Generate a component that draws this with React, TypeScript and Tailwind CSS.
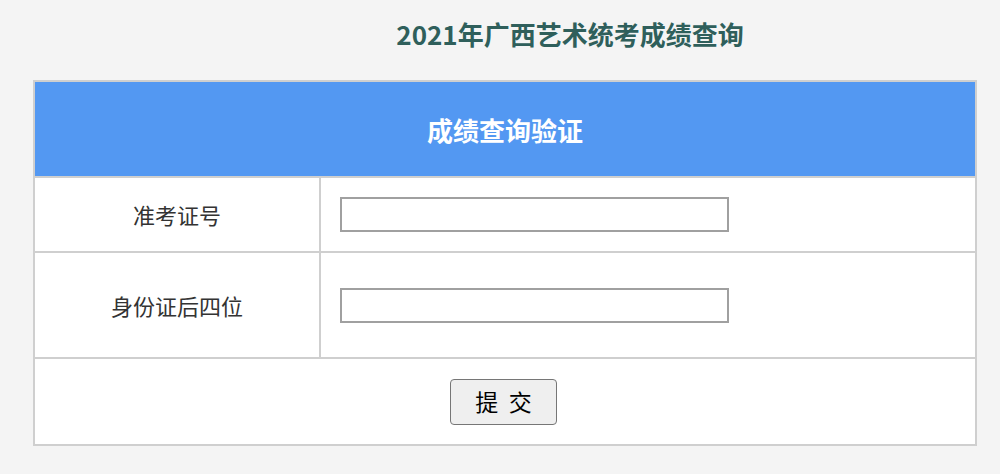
export default function App() {
  const font = { fontFamily: '"Noto Sans CJK SC", "Noto Sans", sans-serif' };
  return (
    <div className="min-h-[474px] w-[1000px] bg-[#f4f4f4] pt-[14px]" style={font}>
      <h1 className="pl-[140px] text-center text-[26px] font-bold leading-[40px] text-[#2f5f5b]">
        2021年广西艺术统考成绩查询
      </h1>
      <div className="ml-[33px] mt-[26px] w-[944px] border-2 border-[#cfcfcf] bg-white">
        <div className="flex h-[94px] items-center justify-center bg-[#5398f2] text-[26px] font-bold text-white">
          成绩查询验证
        </div>
        <div className="flex h-[75px] border-t-2 border-[#cfcfcf]">
          <div className="flex w-[286px] items-center justify-center border-r-2 border-[#cfcfcf] text-[22px] text-[#333]">
            准考证号
          </div>
          <div className="flex flex-1 items-center pl-[19px]">
            <input className="h-[35px] w-[389px] border-2 border-[#a0a0a0] bg-white outline-none" />
          </div>
        </div>
        <div className="flex h-[106px] border-t-2 border-[#cfcfcf]">
          <div className="flex w-[286px] items-center justify-center border-r-2 border-[#cfcfcf] text-[22px] text-[#333]">
            身份证后四位
          </div>
          <div className="flex flex-1 items-center pl-[19px]">
            <input className="h-[35px] w-[389px] border-2 border-[#a0a0a0] bg-white outline-none" />
          </div>
        </div>
        <div className="flex h-[87px] items-center justify-center border-t-2 border-[#cfcfcf] pr-[3px]">
          <button className="h-[46px] w-[107px] rounded-[4px] border border-[#767676] bg-[#efefef] text-[23px] text-black">
            提&nbsp;&nbsp;交
          </button>
        </div>
      </div>
    </div>
  );
}
